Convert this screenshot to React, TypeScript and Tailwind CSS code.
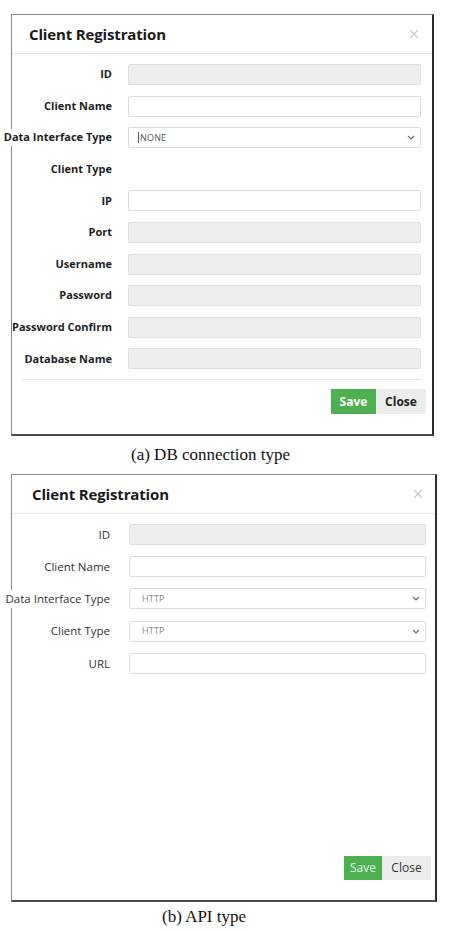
import { ReactNode } from 'react'

type Field = { label: string; kind: 'disabled' | 'text' | 'select' | 'none'; value?: string; caret?: boolean }

const DB_FIELDS: Field[] = [
  { label: 'ID', kind: 'disabled' },
  { label: 'Client Name', kind: 'text' },
  { label: 'Data Interface Type', kind: 'select', value: 'NONE', caret: true },
  { label: 'Client Type', kind: 'none' },
  { label: 'IP', kind: 'text' },
  { label: 'Port', kind: 'disabled' },
  { label: 'Username', kind: 'disabled' },
  { label: 'Password', kind: 'disabled' },
  { label: 'Password Confirm', kind: 'disabled' },
  { label: 'Database Name', kind: 'disabled' },
]

const API_FIELDS: Field[] = [
  { label: 'ID', kind: 'disabled' },
  { label: 'Client Name', kind: 'text' },
  { label: 'Data Interface Type', kind: 'select', value: 'HTTP' },
  { label: 'Client Type', kind: 'select', value: 'HTTP' },
  { label: 'URL', kind: 'text' },
]

function Chevron() {
  return (
    <svg width="8" height="5" viewBox="0 0 8 5" className="shrink-0">
      <path d="M1 1 L4 4 L7 1" fill="none" stroke="#666" strokeWidth="1.2" />
    </svg>
  )
}

function CloseX() {
  return (
    <svg width="10" height="10" viewBox="0 0 10 10">
      <path d="M1 1 L9 9 M9 1 L1 9" stroke="#c8c8c8" strokeWidth="1.2" />
    </svg>
  )
}

function Control({ f, selectText }: { f: Field; selectText: string }) {
  if (f.kind === 'none') return <div className="flex-1" />
  if (f.kind === 'disabled')
    return <div className="flex-1 h-full rounded-[2px] border border-[#dedede] bg-[#eeeeee]" />
  if (f.kind === 'text')
    return <div className="flex-1 h-full rounded-[2px] border border-[#dcdcdc] bg-white" />
  return (
    <div className="flex-1 h-full rounded-[2px] border border-[#dcdcdc] bg-white flex items-center justify-between pl-[9px] pr-[5px]">
      <span className={`flex items-center text-[9px] tracking-[0.02em] ${selectText}`}>
        {f.caret && <span className="w-px h-[11px] bg-[#555] mr-px" />}
        {f.value}
      </span>
      <Chevron />
    </div>
  )
}

function Panel({
  fields, bold, children, className, titlePad, labelW, inputGap, rowGap, rightPad, selectText,
}: {
  fields: Field[]; bold: boolean; children: ReactNode; className: string; titlePad: string
  labelW: string; inputGap: string; rowGap: string; rightPad: string; selectText: string
}) {
  return (
    <div className={`flex flex-col bg-white border border-[#8a8a8a] border-r-2 border-r-[#2e2e2e] border-b-2 border-b-[#4a4a4a] ${className}`}>
      <div className={`flex items-center justify-between h-[39px] border-b border-[#e8e8e8] ${titlePad}`}>
        <h2 className="text-[15px] font-bold text-[#1a1a1a] tracking-[-0.01em]">Client Registration</h2>
        <CloseX />
      </div>
      <div className={`flex flex-col pt-[10px] ${rowGap} ${rightPad}`}>
        {fields.map(f => (
          <div key={f.label} className="flex items-center h-[21px]">
            <div className={`flex justify-end shrink-0 ${labelW}`}>
              <span
                className={`whitespace-nowrap bg-white relative ${bold ? 'text-[11px] font-bold text-[#1e1e1e]' : 'text-[11.5px] text-[#333]'}`}
              >
                {f.label}
              </span>
            </div>
            <div className={`${inputGap} shrink-0`} />
            <Control f={f} selectText={selectText} />
          </div>
        ))}
      </div>
      {children}
    </div>
  )
}

export default function App() {
  return (
    <div className="w-[449px] h-[930px] bg-white pt-[14px] pl-[11px]" style={{ fontFamily: '"Open Sans", "Noto Sans", sans-serif' }}>
      <Panel
        fields={DB_FIELDS}
        bold
        className="w-[423px] h-[422px]"
        titlePad="pl-[17px] pr-[13px]"
        labelW="w-[100px]"
        inputGap="w-[16px]"
        rowGap="gap-[10.6px]"
        rightPad="pr-[11px]"
        selectText="text-[#555]"
      >
        <div className="mt-[10px] ml-[10px] mr-[11px] border-t border-[#e6e6e6]" />
        <div className="flex justify-end mt-[9px] mr-[6px]">
          <button className="w-[45px] h-[25px] bg-[#4caf50] text-white text-[12px] font-bold">Save</button>
          <button className="w-[50px] h-[25px] bg-[#ececec] text-[#222] text-[12px] font-bold">Close</button>
        </div>
      </Panel>

      <div className="h-[38px] flex items-center pl-[120px]" style={{ fontFamily: '"Liberation Serif", serif' }}>
        <span className="text-[17px] text-[#111]">(a) DB connection type</span>
      </div>

      <Panel
        fields={API_FIELDS}
        bold={false}
        className="w-[426px] h-[428px]"
        titlePad="pl-[20px] pr-[12px]"
        labelW="w-[98px]"
        inputGap="w-[19px]"
        rowGap="gap-[11.2px]"
        rightPad="pr-[9px]"
        selectText="text-[#888] pl-[3px]"
      >
        <div className="flex-1" />
        <div className="flex justify-end mb-[20px] mr-[4px]">
          <button className="w-[38px] h-[24px] bg-[#4caf50] text-[#e8f5e9] text-[12px]">Save</button>
          <button className="w-[49px] h-[24px] bg-[#ececec] text-[#333] text-[12px]">Close</button>
        </div>
      </Panel>

      <div className="h-[30px] flex items-center pl-[151px]" style={{ fontFamily: '"Liberation Serif", serif' }}>
        <span className="text-[17px] text-[#111]">(b) API type</span>
      </div>
    </div>
  )
}
